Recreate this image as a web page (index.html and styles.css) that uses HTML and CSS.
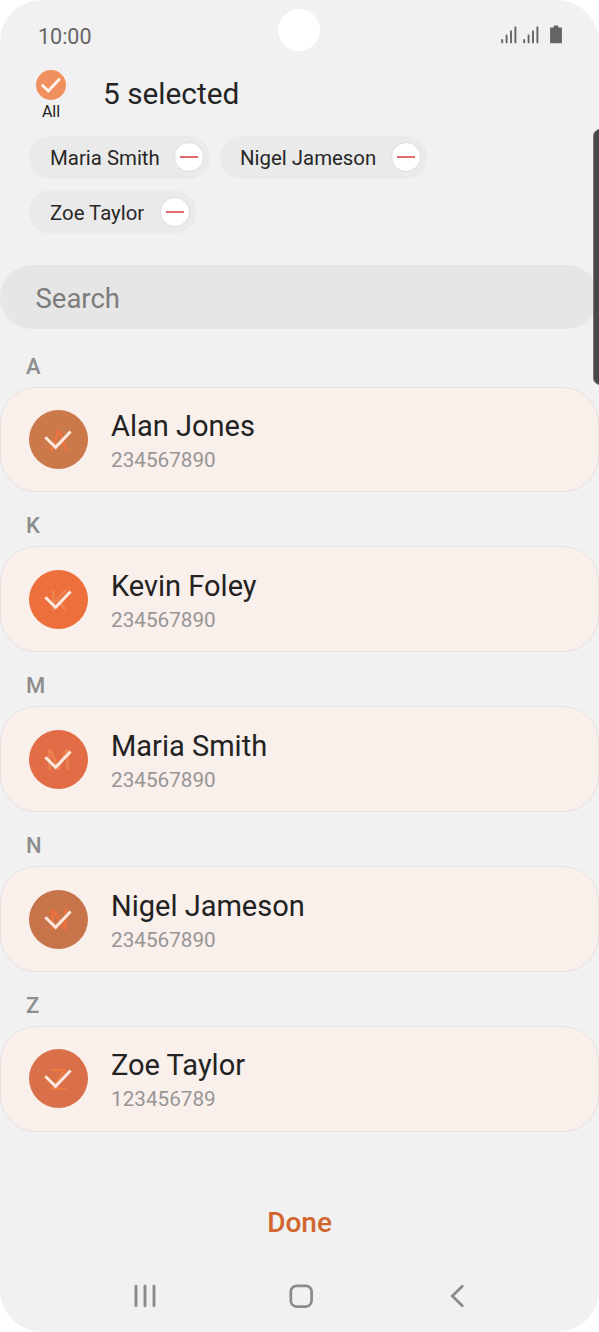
FILE: index.html
```
<!DOCTYPE html>
<html lang="en">
<head>
<meta charset="utf-8">
<title>Select contacts</title>
<link rel="stylesheet" href="styles.css">
</head>
<body>
<svg class="defs" width="0" height="0" aria-hidden="true">
  <symbol id="check" viewBox="0 0 28 20"><path d="M1.3 7.2 L11.6 17.3 L26.6 1.5" fill="none" stroke="#fbe9e0" stroke-width="3"/></symbol>
  <symbol id="signal" viewBox="0 0 16 18"><path d="M1.2 14v2.4M5.6 9.4v7M10 5.2v11.2M14.4 1.2v15.2" fill="none" stroke="#646464" stroke-width="1.9" stroke-linecap="round"/></symbol>
</svg>
<div class="phone">
  <div class="camera"></div>
  <div class="edge-handle"></div>
  <header class="status">
    <span class="time">10:00</span>
    <div class="status-icons">
      <svg class="signal"><use href="#signal"/></svg>
      <svg class="signal"><use href="#signal"/></svg>
      <svg class="battery" viewBox="0 0 12 19"><path d="M1 2.5h2.700V1Q3.700.4 4.300.4h3.400Q8.300.4 8.300 1v1.500H11q.9 0 .9.900v14q0 .900-.9.900H1q-.9 0-.9-.900v-14q0-.900.9-.900z" fill="#646464"/></svg>
    </div>
  </header>
  <div class="title-bar">
    <div class="all">
      <svg class="all-icon" viewBox="0 0 30 30"><circle cx="15" cy="15" r="15" fill="#f0905f"/><path d="M5.800 14.800L12.300 21L23.800 8.700" fill="none" stroke="#fff3ec" stroke-width="2.900"/></svg>
      <span class="all-label">All</span>
    </div>
    <h1 class="title">5 selected</h1>
  </div>
  <div class="chips">
    <div class="chip"><span class="chip-name c1">Maria Smith</span><span class="remove"></span></div>
    <div class="chip"><span class="chip-name c2">Nigel Jameson</span><span class="remove"></span></div>
    <div class="chip"><span class="chip-name c3">Zoe Taylor</span><span class="remove"></span></div>
  </div>
  <div class="search">Search</div>
  <main class="list">
    <section class="group">
      <h2 class="letter">A</h2>
      <div class="card"><div class="avatar brown"><span class="initial">A</span><svg class="tick"><use href="#check"/></svg></div><div class="info"><div class="name">Alan Jones</div><div class="number">234567890</div></div></div>
    </section>
    <section class="group">
      <h2 class="letter">K</h2>
      <div class="card"><div class="avatar orange"><span class="initial">K</span><svg class="tick"><use href="#check"/></svg></div><div class="info"><div class="name">Kevin Foley</div><div class="number">234567890</div></div></div>
    </section>
    <section class="group">
      <h2 class="letter">M</h2>
      <div class="card"><div class="avatar coral"><span class="initial">M</span><svg class="tick"><use href="#check"/></svg></div><div class="info"><div class="name">Maria Smith</div><div class="number">234567890</div></div></div>
    </section>
    <section class="group">
      <h2 class="letter">N</h2>
      <div class="card"><div class="avatar clay"><span class="initial">N</span><svg class="tick"><use href="#check"/></svg></div><div class="info"><div class="name">Nigel Jameson</div><div class="number">234567890</div></div></div>
    </section>
    <section class="group">
      <h2 class="letter">Z</h2>
      <div class="card"><div class="avatar rust"><span class="initial">Z</span><svg class="tick"><use href="#check"/></svg></div><div class="info"><div class="name">Zoe Taylor</div><div class="number">123456789</div></div></div>
    </section>
  </main>
  <div class="done">Done</div>
  <nav class="nav">
    <svg class="nav-icon" viewBox="0 0 26 26"><path d="M4 3.300v19.400M13 3.300v19.400M22 3.300v19.400" fill="none" stroke="#8a8a8a" stroke-width="2.900" stroke-linecap="round"/></svg>
    <svg class="nav-icon" viewBox="0 0 26 26"><rect x="2.800" y="2.800" width="20.800" height="20.800" rx="5.800" fill="none" stroke="#8a8a8a" stroke-width="2.700"/></svg>
    <svg class="nav-icon" viewBox="0 0 26 26"><path d="M18.300 3.300L8.300 13L18.300 22.700" fill="none" stroke="#8a8a8a" stroke-width="2.700" stroke-linecap="round"/></svg>
  </nav>
</div>
</body>
</html>
```
FILE: styles.css
```
* { box-sizing: border-box; }
body { margin: 0; background: #fff; font-family: Roboto, sans-serif; }
.defs { position: absolute; }
.phone {
  position: relative;
  width: 599px;
  height: 1332px;
  display: flex;
  flex-direction: column;
  overflow: hidden;
  border-radius: 42px;
  background: #f1f1f1;
}
.camera {
  position: absolute;
  left: 278px;
  top: 9px;
  width: 42px;
  height: 42px;
  border-radius: 50%;
  background: #fff;
}
.edge-handle {
  position: absolute;
  z-index: 1;
  left: 593px;
  top: 129px;
  width: 14px;
  height: 256px;
  border: 1px solid #777;
  border-radius: 7px;
  background: #484848;
}
.status {
  display: flex;
  justify-content: space-between;
  height: 70px;
  padding: 0 37px 0 38px;
}
.time { color: #666; font-size: 21.500px; line-height: 73px; }
.status-icons { display: flex; padding-top: 26px; }
.signal { width: 16px; height: 18px; margin-right: 6px; }
.battery { width: 12px; height: 19px; margin: -1px 0 0 5px; }
.title-bar { display: flex; height: 65.500px; padding-left: 31px; }
.all { display: flex; flex-direction: column; align-items: center; width: 40px; }
.all-icon { width: 30px; height: 30px; }
.all-label { color: #222; font-size: 16px; line-height: 23px; }
.title {
  margin: 0 0 0 32px;
  color: #252525;
  font-size: 29.800px;
  font-weight: 400;
  line-height: 48px;
}
.chips {
  display: flex;
  flex-wrap: wrap;
  align-content: flex-start;
  gap: 11px 10px;
  height: 129.800px;
  padding: 0 100px 0 29px;
}
.chip {
  display: flex;
  align-items: center;
  height: 43.500px;
  padding: 0 6px 0 21px;
  border-radius: 22px;
  background: #eaeaea;
}
.chip-name { padding-top: 2px; color: #282828; font-size: 20.400px; line-height: 44px; white-space: nowrap; }
.c1 { width: 124px; }
.c2 { width: 151px; margin-left: -1px; }
.c3 { width: 110px; }
.remove {
  display: flex;
  align-items: center;
  justify-content: center;
  width: 30px;
  height: 30px;
  border: 1px solid #dedede;
  border-radius: 50%;
  background: #fff;
}
.remove::before { content: ""; width: 18px; height: 2px; background: #e06a70; }
.search {
  height: 64.200px;
  padding-left: 35.500px;
  border-radius: 33px;
  background: #e6e6e6;
  color: #7c7c7c;
  font-size: 27.500px;
  line-height: 67px;
}
.list { height: 802.500px; padding-top: 3.200px; }
.group { height: 159.800px; }
.letter {
  margin: 0;
  height: 54px;
  padding-left: 26px;
  color: #8d8d8d;
  font-size: 22px;
  font-weight: 500;
  line-height: 67px;
}
.card {
  display: flex;
  height: 105.800px;
  padding: 22.600px 28px;
  border: 1px solid #e4e1e0;
  border-radius: 36px;
  background: #f9efeb;
}
.avatar {
  position: relative;
  display: flex;
  align-items: center;
  justify-content: center;
  width: 59px;
  height: 59px;
  border-radius: 50%;
}
.initial { padding-top: 3px; font-size: 29px; line-height: 59px; }
.tick { position: absolute; left: 15px; top: 20px; width: 28px; height: 20px; }
.brown { background: #cb784a; color: #ee7340; }
.orange { background: #ed6f3b; color: #ee8150; }
.coral { background: #e16c46; color: #ec8050; }
.clay { background: #c8744b; color: #e8703c; }
.rust { background: #d9704a; color: #ee7a40; }
.info { padding: 0 0 0 23px; white-space: nowrap; }
.name { color: #222; font-size: 29px; line-height: 32px; }
.number { color: #969696; font-size: 20.700px; line-height: 37px; }
.done {
  height: 110px;
  padding-top: 74.500px;
  color: #d2662f;
  font-size: 28px;
  font-weight: 500;
  line-height: 34px;
  text-align: center;
}
.nav { display: flex; gap: 130px; padding: 41.500px 0 0 131.500px; }
.nav-icon { width: 26px; height: 26px; }
```
